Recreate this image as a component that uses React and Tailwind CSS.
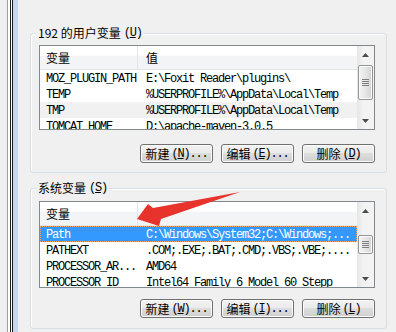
import React from "react";

const mono = "font-['Liberation_Mono',monospace] text-[12px] tracking-[-1.2px]";
const cjk = "font-['Noto_Sans_CJK_SC',sans-serif] text-[12px]";

function Arrow() {
  return (
    <div className="flex flex-col items-center justify-center w-full h-[17px]">
      <svg width="7" height="4" viewBox="0 0 7 4">
        <polygon points="3.5,0 7,4 0,4" fill="#4a4a4a" />
      </svg>
    </div>
  );
}
function ArrowDown() {
  return (
    <div className="flex flex-col items-center justify-center w-full h-[17px]">
      <svg width="7" height="4" viewBox="0 0 7 4">
        <polygon points="0,0 7,0 3.5,4" fill="#4a4a4a" />
      </svg>
    </div>
  );
}

function Thumb({ h }) {
  return (
    <div
      className={`mx-[1px] ${h} rounded-[2px] border border-[#959595] bg-[linear-gradient(90deg,#f4f4f4,#e6e6e6_50%,#d3d3d3)] shadow-[inset_0_0_0_1px_#fbfbfb] flex flex-col items-center justify-center gap-[1px]`}
    >
      <div className="w-[7px] h-px bg-[#7e7e7e]" />
      <div className="w-[7px] h-px bg-[#7e7e7e]" />
      <div className="w-[7px] h-px bg-[#7e7e7e]" />
      <div className="w-[7px] h-px bg-[#7e7e7e]" />
    </div>
  );
}

function ScrollBar({ spacer, thumb }) {
  return (
    <div className="w-[17px] h-full flex flex-col bg-[linear-gradient(90deg,#e6e6e6,#f3f3f3_40%,#f3f3f3)]">
      <Arrow />
      <div className={spacer} />
      <Thumb h={thumb} />
      <div className="flex-1" />
      <ArrowDown />
    </div>
  );
}

function Row({ name, value, sel, hover }) {
  let cls = "flex items-center h-[16px] shrink-0 text-black";
  if (sel) cls = "flex items-center h-[16px] shrink-0 bg-[#3399ff] text-white outline-1 outline-dotted -outline-offset-1 outline-[#f7a35c]";
  if (hover) cls = "flex items-center h-[16px] shrink-0 bg-[#f1f1f1] text-black";
  return (
    <div className={cls}>
      <div className={`w-[98px] pl-[6px] pt-[2px] leading-[16px] whitespace-pre overflow-hidden ${mono}`}>{name}</div>
      <div className={`flex-1 pl-[8px] pt-[2px] leading-[16px] whitespace-pre overflow-hidden ${mono}`}>{value}</div>
    </div>
  );
}

function ListView({ h, rows, spacer, thumb }) {
  return (
    <div className={`w-[336px] ${h} border border-[#828790] bg-white flex overflow-hidden`}>
      <div className="flex-1 flex flex-col overflow-hidden">
        <div className="h-[24px] shrink-0 flex border-b border-[#e5e5e5] bg-[linear-gradient(#ffffff_0%,#ffffff_40%,#f3f4f6_45%,#f3f4f6_100%)]">
          <div className={`w-[98px] pl-[6px] flex items-center border-r border-[#e5e5e5] ${cjk}`}>变量</div>
          <div className={`flex-1 pl-[8px] flex items-center ${cjk}`}>值</div>
        </div>
        {rows.map((r, i) => (
          <Row key={i} {...r} />
        ))}
      </div>
      <ScrollBar spacer={spacer} thumb={thumb} />
    </div>
  );
}

function Btn({ label, k, dots }) {
  return (
    <div className="w-[73px] h-[19px] rounded-[3px] border border-[#707070] bg-[linear-gradient(#f2f2f2_0%,#ebebeb_45%,#dddddd_50%,#cfcfcf_100%)] shadow-[inset_0_0_0_1px_#fcfcfc] flex items-center justify-center text-black">
      <span className={`${cjk} leading-[16px]`}>{label}</span>
      <span className={`${mono} leading-[16px] ml-[2px]`}>
        (<u>{k}</u>){dots ? "..." : ""}
      </span>
    </div>
  );
}

function Buttons({ k1, k2, k3, mt }) {
  return (
    <div className={`w-[336px] flex justify-end gap-[8px] ${mt}`}>
      <Btn label="新建" k={k1} dots />
      <Btn label="编辑" k={k2} dots />
      <Btn label="删除" k={k3} />
    </div>
  );
}

function Group({ title, k, h, pt, mt, children }) {
  return (
    <div
      className={`relative w-[357px] ${h} ${mt} rounded-[3px] border border-[#d5dfe5] shadow-[inset_1px_1px_0_#ffffff] pl-[8px] ${pt}`}
    >
      <div className="absolute left-[5px] top-[-9px] px-[2px] bg-[#f0f0f0] leading-[16px] flex items-center text-black">
        <span className={cjk}>{title}</span>
        <span className={`${mono} ml-[3px]`}>
          (<u>{k}</u>)
        </span>
      </div>
      {children}
    </div>
  );
}

export default function App() {
  const userRows = [
    { name: "MOZ_PLUGIN_PATH", value: "E:\\Foxit Reader\\plugins\\" },
    { name: "TEMP", value: "%USERPROFILE%\\AppData\\Local\\Temp" },
    { name: "TMP", value: "%USERPROFILE%\\AppData\\Local\\Temp", hover: true },
    { name: "TOMCAT_HOME", value: "D:\\apache-maven-3.0.5" },
  ];
  const sysRows = [
    { name: "Path", value: "C:\\Windows\\System32;C:\\Windows;...", sel: true },
    { name: "PATHEXT", value: ".COM;.EXE;.BAT;.CMD;.VBS;.VBE;...." },
    { name: "PROCESSOR_AR...", value: "AMD64" },
    { name: "PROCESSOR_ID", value: "Intel64 Family 6 Model 60 Stepp" },
  ];
  return (
    <div className="relative w-[396px] h-[332px] overflow-hidden bg-[#f0f0f0] flex">
      <div className="flex h-full shrink-0">
        <div className="w-[7px] bg-[#efefef]" />
        <div className="w-px bg-[#a0a0a0]" />
        <div className="w-[2px] bg-white" />
        <div className="w-px bg-[#1c1c1c]" />
        <div className="w-px bg-white" />
        <div className="w-px bg-[#1c1c1c]" />
        <div className="w-[5px] bg-[#c5d8ee]" />
      </div>
      <div className="flex-1 pl-[12px] pt-[33px] flex flex-col">
        <Group title="192 的用户变量" k="U" h="h-[140px]" pt="pt-[11px]" mt="">
          <ListView h="h-[85px]" rows={userRows} spacer="h-[2px]" thumb="h-[35px]" />
          <Buttons k1="N" k2="E" k3="D" mt="mt-[14px]" />
        </Group>
        <Group title="系统变量" k="S" h="h-[141px]" pt="pt-[12px]" mt="mt-[15px]">
          <ListView h="h-[87px]" rows={sysRows} spacer="h-[16px]" thumb="h-[19px]" />
          <Buttons k1="W" k2="I" k3="L" mt="mt-[11px]" />
        </Group>
      </div>
      <svg className="absolute left-0 top-0 pointer-events-none" width="396" height="332">
        <polygon points="137,219 148,204 153,208 240,192 161,219 159,226" fill="#e8322c" />
      </svg>
    </div>
  );
}
